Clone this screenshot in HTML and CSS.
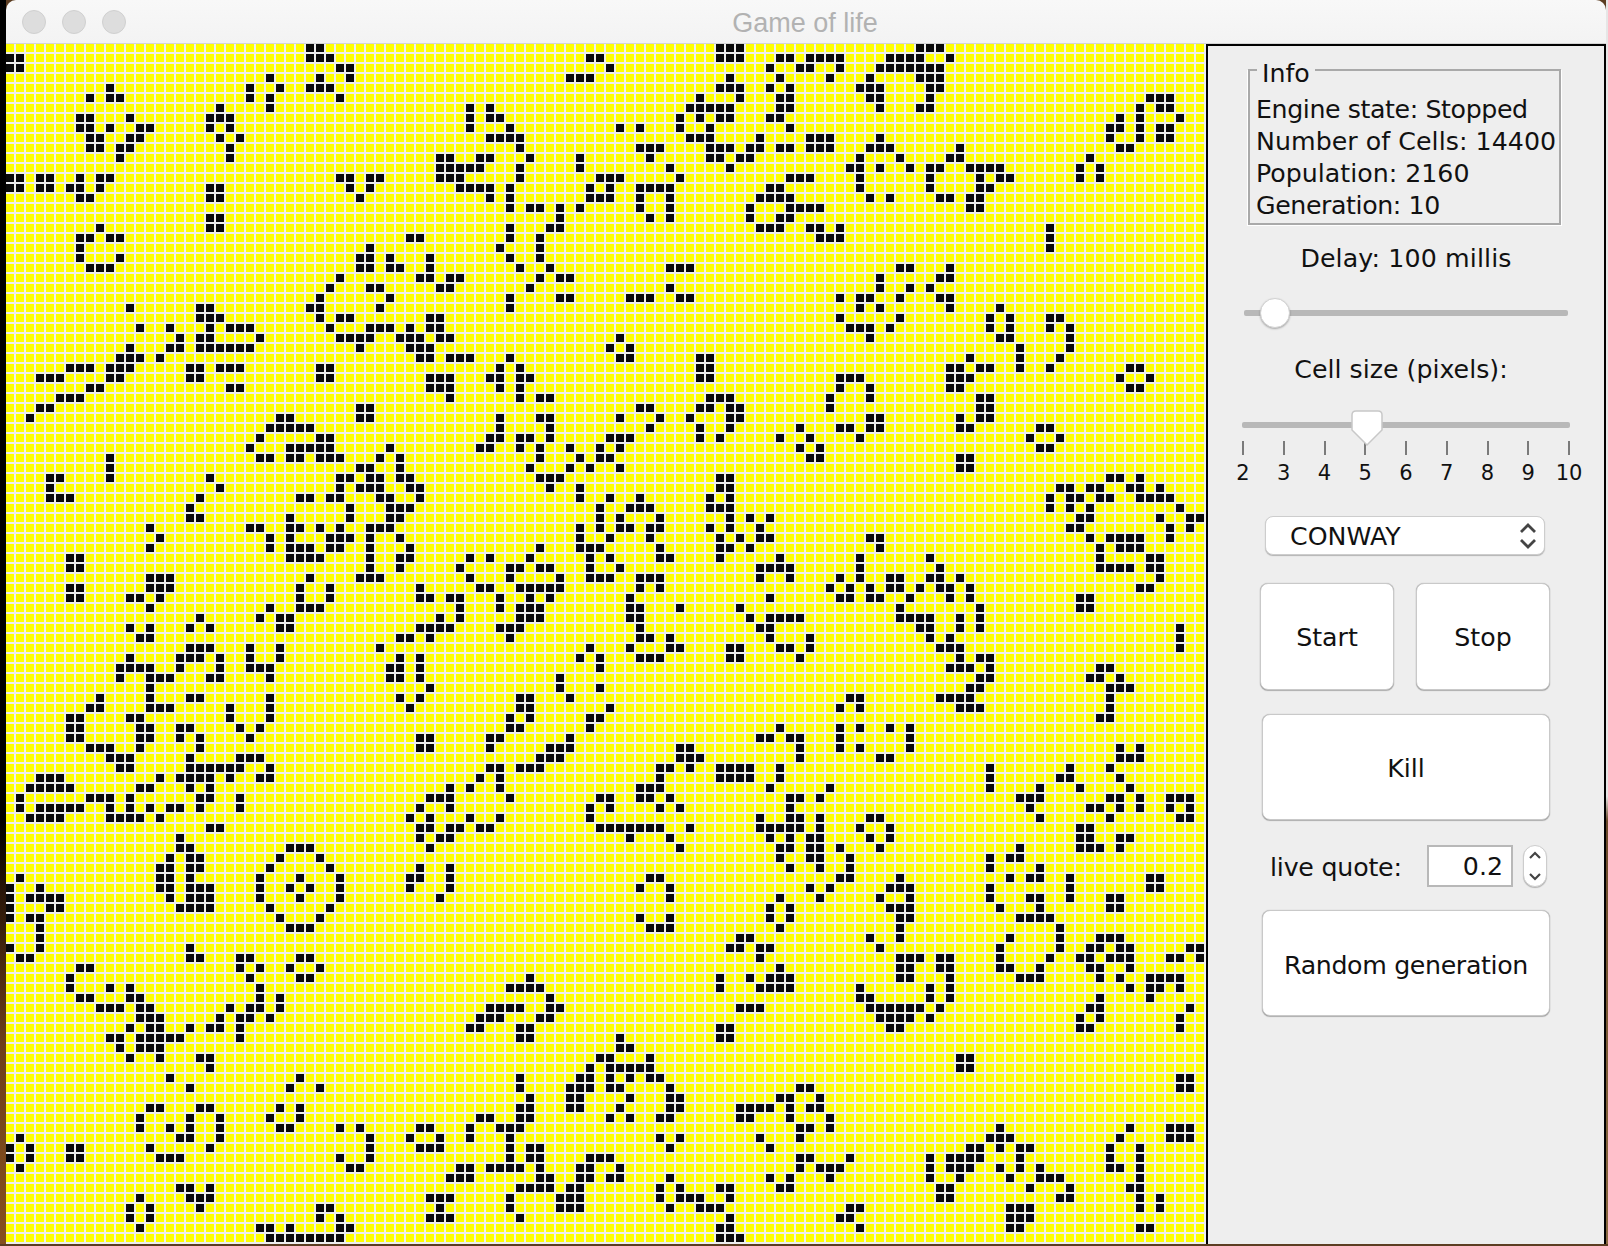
FILE: index.html
```html
<!DOCTYPE html>
<html lang="en">
<head>
<meta charset="utf-8">
<title>Game of life</title>
<link rel="stylesheet" href="styles.css">
</head>
<body>
<div class="desktop">
  <div class="strip-left"></div>
  <div class="window">
    <header class="titlebar">
      <div class="lights"><span class="light"></span><span class="light"></span><span class="light"></span></div>
      <div class="title">Game of life</div>
    </header>
    <div class="content">
      <canvas id="board" class="board" width="1200" height="1200"></canvas>
      <aside class="panel">
        <fieldset class="info">
          <legend class="info-legend">Info</legend>
          <div class="line tight">Engine state: Stopped</div>
          <div class="line wide-line">Number of Cells: 14400</div>
          <div class="line">Population: 2160</div>
          <div class="line tight">Generation: 10</div>
        </fieldset>
        <div class="line caption delay-caption">Delay: 100 millis</div>
        <div class="slider delay-slider">
          <div class="track"></div>
          <div class="round-thumb"></div>
        </div>
        <div class="line caption cell-caption">Cell size (pixels):</div>
        <div class="slider cell-slider">
          <div class="track"></div>
          <svg class="point-thumb" width="34" height="38" viewBox="0 0 34 38">
            <path class="point-thumb-shape" d="M6 2H28Q32 2 32 6V21L17 36L2 21V6Q2 2 6 2Z"/>
          </svg>
        </div>
        <div class="ticks">
          <div class="tick"><span class="tick-label">2</span></div>
          <div class="tick"><span class="tick-label">3</span></div>
          <div class="tick"><span class="tick-label">4</span></div>
          <div class="tick"><span class="tick-label">5</span></div>
          <div class="tick"><span class="tick-label">6</span></div>
          <div class="tick"><span class="tick-label">7</span></div>
          <div class="tick"><span class="tick-label">8</span></div>
          <div class="tick"><span class="tick-label">9</span></div>
          <div class="tick"><span class="tick-label">10</span></div>
        </div>
        <div class="combo">
          <span class="combo-text">CONWAY</span>
          <svg class="combo-arrows" width="18" height="28" viewBox="0 0 18 28">
            <path class="chevron" d="M2 10L9 3L16 10"/>
            <path class="chevron" d="M2 18L9 25L16 18"/>
          </svg>
        </div>
        <div class="button-row">
          <button class="btn btn-half">Start</button>
          <button class="btn btn-half">Stop</button>
        </div>
        <button class="btn btn-wide kill">Kill</button>
        <div class="quote-row">
          <span class="quote-label">live quote:</span>
          <div class="quote-field">0.2</div>
          <div class="spinner">
            <svg width="14" height="32" viewBox="0 0 14 32">
              <path class="chevron-small" d="M2 8L7 3L12 8"/>
              <path class="chevron-small" d="M2 24L7 29L12 24"/>
            </svg>
          </div>
        </div>
        <button class="btn btn-wide random">Random generation</button>
      </aside>
    </div>
  </div>
  <div class="strip-right"></div>
</div>
<script src="game.js"></script>
</body>
</html>
```
FILE: styles.css
```css
html, body {
  margin: 0;
  padding: 0;
  width: 1608px;
  height: 1246px;
  overflow: hidden;
  background: #5c3d22;
}
* { box-sizing: border-box; }
.desktop {
  display: flex;
  height: 1244px;
  font-family: "DejaVu Sans", sans-serif;
  font-size: 25.25px;
  color: #111;
}
.strip-left {
  width: 6px;
  background: linear-gradient(#000 0, #000 66%, #2a1608 72%, #6d3f1c 84%, #85501f 100%);
}
.strip-right {
  width: 2px;
  background: linear-gradient(#e6e6e6 0, #e6e6e6 64%, #6b4a2a 66%, #8a6a42 100%);
}
.window {
  width: 1600px;
  display: flex;
  flex-direction: column;
}
.titlebar {
  height: 44px;
  background: linear-gradient(#f8f8f8, #f3f3f3);
  border-bottom: 1px solid #d4d4d4;
  border-radius: 10px 10px 0 0;
  position: relative;
  display: flex;
  align-items: center;
  justify-content: center;
}
.lights {
  position: absolute;
  left: 16px;
  top: 10px;
  display: flex;
  gap: 16px;
}
.light {
  width: 24px;
  height: 24px;
  border-radius: 50%;
  background: #dddddd;
  border: 1px solid #d0d0d0;
}
.title {
  padding: 3px 2px 0 0;
  font-family: "Liberation Sans", sans-serif;
  font-size: 27px;
  color: #b2b2b2;
}
.content {
  display: flex;
  height: 1200px;
}
.board {
  display: block;
  width: 1200px;
  height: 1200px;
}
.panel {
  width: 400px;
  height: 1200px;
  background: #eeeeee;
  border: solid #000;
  border-width: 2px 2px 0 2px;
  padding-top: 4px;
  display: flex;
  flex-direction: column;
  align-items: flex-start;
}
.line {
  height: 32px;
  line-height: 32px;
  white-space: nowrap;
}
.tight { letter-spacing: -0.4px; }
.wide-line { letter-spacing: 0.05px; }
.info {
  margin: 0 0 0 40px;
  padding: 4px 0 1px 6px;
  width: 313px;
  min-width: 0;
  border: 2px solid #a9a9a9;
  box-shadow: 1px 1px 0 #fff, -1px 1px 0 #fff;
}
.info-legend {
  margin-left: 1px;
  padding: 8px 5px 0;
  height: 40px;
  line-height: 32px;
}
.caption {
  width: 100%;
  text-align: center;
}
.delay-caption {
  margin-top: 18px;
  letter-spacing: 0.12px;
}
.cell-caption {
  margin-top: 26px;
  padding-right: 10px;
}
.slider {
  position: relative;
  height: 30px;
  display: flex;
  align-items: center;
}
.delay-slider {
  margin: 23px 0 0 36px;
  width: 324px;
}
.cell-slider {
  margin: 24px 0 0 34px;
  width: 328px;
}
.track {
  width: 100%;
  height: 6px;
  background: #b8b8b8;
  border-radius: 2px;
}
.round-thumb {
  position: absolute;
  left: 16px;
  top: 0;
  width: 30px;
  height: 30px;
  border-radius: 50%;
  background: #fff;
  border: 1px solid #d2d2d2;
  box-shadow: 0 1px 2px rgba(0, 0, 0, 0.3);
}
.point-thumb {
  position: absolute;
  left: 108px;
  top: -1px;
}
.point-thumb-shape {
  fill: #fff;
  stroke: #c8c8c8;
  stroke-width: 1.5;
}
.ticks {
  margin: 1px 0 0 35px;
  width: 326px;
  display: flex;
  justify-content: space-between;
}
.tick {
  width: 0;
  display: flex;
  flex-direction: column;
  align-items: center;
}
.tick::before {
  content: "";
  flex: none;
  width: 2px;
  height: 14px;
  background: #7a7a7a;
}
.tick-label {
  margin-top: 6px;
  font-size: 21px;
  line-height: 24px;
}
.combo {
  margin: 31px 0 0 57px;
  width: 280px;
  height: 39px;
  padding: 0 7px 0 24px;
  background: #fff;
  border: 1px solid #cdcdcd;
  border-radius: 8px;
  box-shadow: 0 1px 1px rgba(0, 0, 0, 0.25);
  display: flex;
  align-items: center;
  justify-content: space-between;
}
.combo-text { padding-top: 2px; }
.chevron {
  fill: none;
  stroke: #444;
  stroke-width: 2.8;
}
.chevron-small {
  fill: none;
  stroke: #444;
  stroke-width: 2.2;
}
.button-row {
  margin: 28px 0 0 52px;
  display: flex;
  gap: 22px;
}
.btn {
  font: inherit;
  color: inherit;
  background: #fff;
  border: 1px solid #c9c9c9;
  border-radius: 8px;
  box-shadow: 0 0 1px rgba(0, 0, 0, 0.3), 0 1px 1px rgba(0, 0, 0, 0.25);
  padding: 2px 0 0;
}
.btn-half {
  width: 134px;
  height: 107px;
}
.btn-wide {
  width: 288px;
  height: 106px;
  margin-left: 54px;
}
.kill { margin-top: 24px; }
.random {
  margin-top: 23px;
  padding-top: 4px;
  letter-spacing: -0.35px;
}
.quote-row {
  margin: 25px 0 0 62px;
  height: 42px;
  display: flex;
  align-items: center;
}
.quote-label {
  width: 157px;
  padding-top: 2px;
  letter-spacing: -0.2px;
}
.quote-field {
  width: 86px;
  height: 42px;
  line-height: 40px;
  padding-right: 8px;
  text-align: right;
  background: #fff;
  border: 2px solid #b8b8b8;
}
.spinner {
  margin-left: 10px;
  width: 24px;
  height: 42px;
  background: #fff;
  border: 1px solid #cdcdcd;
  border-radius: 12px;
  box-shadow: 0 1px 1px rgba(0, 0, 0, 0.25);
  display: flex;
  align-items: center;
  justify-content: center;
}
```
FILE: game.js
```js
var blocks = [
 {x:0,y:0,rows:["30 31","0 1 30 31 32","0 1 33 34","26 31 34","10 24 27 30 31 32","8 10 11 24 26 33","21 26","7 8 12 20 21 22","7 8 10 13 14 20 22","8 9 12 13 21 23",
 "8 9 11 12 22","11 22","","0 1 3 4 7 9 10 33 34 36 37","0 1 3 4 6 7 9 20 21 34 36","7 8 20 21 35","","20 21","9 20 21","7 8 10 11",
 "7 36","7 11 35 36 38","8 9 10 35 36 38 39","33","32 36 37","31 38","12 19 20 30 31 37","19 20 21 31 33 34","13 16 20 22 23 24 32 36 37 38","17 19 20 25 33 34 35 36 39",
 "12 16 17 19 20 21 22 23 24 35","11 12 13 15","6 7 8 10 11 12 18 19 21 22 23 31 32","3 4 5 10 11 18 19 31 32","8 9 22 23","5 6 7","3 4 35 36","2 27 28 35 36","26 27 28 29 30","25 31 32",
 "24 28 29 30 31 32 38","10 25 26 28 29 31 32 33 37 39","10 35 36 39","4 5 10 20 33 34 36 37 39","4 21 33 35 36 37","4 5 6 19 29 30 32 33 37 38","18 34 38 39","18 19 28 34 38 39","14 24 25 28 29 31 33 36 37 38","15 26 28 32 33 34 36 39",
 "14 26 28 29 30 32 33 36","6 7 28 29 30 31 36 39","6 7 36 39","14 15 16 30 35 36 37","6 7 14 15 16 29 32","6 7 12 13 15 29 32","14 26 29 30 31","19 25 27 28","12 14 18 20 27 28","13 14 39"]},
 {x:40,y:0,rows:["31 32 33","18 19 31 32 33 37 38","20 36 39","16 17 18 32 37","31 32 33 36 38","29 33 37 38","6 8 28 29 30 31 32 37 38","6 8 9 27 29 31 32 36 37","6 10 21 23 27 30 38","8 9 10 11 28 29 30 35",
 "11 23 24 25 30 31 32 34 35 37 38","3 4 7 8 12 17 24 30 31 33 34","3 4 5 6 7 11 17 26 32","3 4 5 11 19 20 21 27 38 39","5 6 7 8 10 18 20 23 24 25 26 36 37","8 10 18 19 20 23 26 35 36 37 38","10 12 13 15 17 23 26 34 38 39","15 24 26 34 37 38","10 14 15 35 36 37","0 1 10 13",
 "9 13","2 10 13","2 11 14 26 27 28","1 2 4 5 13 15 16","3 4 12 26","10 15 16 22 23 24 27 28","10","2 3","0 2 3","0 1 3 4 21",
 "0 1 2 20 22","1 2 4 5 6 10 21 22 29 30","9 11 29 30","2 3 4 8 9 11 12 29 30","2 3 4 9 11","4 11 13 14 30 31 32","23 24 29 30 32 33","9 13 14 21 25 28 32 33","9 14 24 29 32 39","8 9 11 12 14 20 21 22 29 31 37",
 "7 8 11 13 16 19 21 39","13 17 19 20","12 16 18 21","0 13 14 15 31 32","0 1 14 17 31 32","1 17 20 23 30 32","0 19 22 23 24 30 31 32","19 21 25 32 34 36","17 19 21 22 24 25 30 32 35","17 20 24 31 33 35 36",
 "0 13 17 18 19 25 31 32 34","0 6 8 12 18 20 25 26 31 37","5 10 11 13 14 18 21 35 36 37 38","6 10 15 18 19 20 23 24 25 35 38","1 7 8 11 12 13 14 15 23 25","1 2 4 5 9 12 14 22 36","5 9 11 12 13 22 23 27 33","3 5 11 12 13 22 23 34 36 37 38 39","1 2 3 4 9 10 11 23 35 36","0 2 10 23 24 26 36"]},
 {x:80,y:0,rows:["11 12 13","0 1 2 3 8 9 10 11 14","0 3 7 8 9 10 11 12 13","2 6 11 12 13","5 6 7 12 13","6 7 12 34 35 36","7 11 12 33 35 36","31 33 37","30 31 33 35 36","0 1 2 7 30 33 35 36",
 "0 1 2 6 7 8 15 31 32","5 9 14 15 28","4 5 7 10 12 13 16 17 18 19 27 29","0 5 12 17 19 20 27 29","5 12 17 18","6 8 13 14 16 17","0 1 16 17","","0 1 3 24","1 2 3 24",
 "24","","9 10 14","7 13 14","7 10 12","3 5 6 9 13 14","5 7 14 19","3 9 18 20 24 25","4 5 6 8 18 20 24 26","6 19 20 26",
 "21 26","16 21 25","14 15 17 18 21 24 32 33","3 4 5 14 15 16 31 34","3 6 14 15 32 33","2 6 17 18","2 17 18","6 7 15 17 18","3 4 6 7 15 16 23 24","0 5 22 25",
 "1 23 24","0 1 15 16","15 16","30 31 33","25 26 28 29 32 33 35","24 26 27 29 30 33 34 35 36","24 26 28 37","27 28 35 38 39","26 27 36 38","6 7 28 30 31 32 33 36",
 "7 29 31 32 33","5 12 29 34 35","5 13 29 30 31 32 34 35","3 5 8 9 12 13 15 35","2 4 6 8 9 11 13 14 16 33 34","3 4 6 7 10 14 16 27 28","9 17 27 28","9 10 11 12 15 17","11 12 15 17 37","0 12 14 37"]},
 {x:0,y:60,rows:["18 19 20 24 27 37","12 17 18 19 21 24 27 39","11 12 13 14 17 21 24 25 26 38 39","11 14 15 16 20 21 26 38 39","14","9 14 18 19 26 39","8 9 14 15 16 22 26","6 7 12 13 22 26","6 7 13 14 17 18 23 25","6 7 13 14 17 19 24",
 "8 9 10 13 19","10 11 12 18 23 24 25","11 12 18 19 20 21 22 23 26","3 4 5 15 17 18 19 20 22 25 26","2 3 4 5 6 13 14 18 20","1 8 9 10 12 19 20 23","1 3 4 5 6 7 10 12 14 16 17 19 23","2 3 4 5 10 11 12 13 15","20 21","17",
 "17 18 28 29 30","16 18 19 27 31","15 16 18 19 26 32","1 15 16 18 25 29 33","0 3 15 16 18 19 20 25 28 30 33","0 2 3 4 5 16 18 19 20 25 29 33","0 4 5 17 18 19 20 26 32","0 2 3 27 31","3 28 29 30","3",
 "0 3 18","1 2 18 19 23 24 29 30","7 8 23 25 28 31","6 24 29 30","6 10 12 25","7 8 12 13 25 27","9 10 11 13 14 22 24 25 27","13 14 15 21 23 24 26","12 14 15 18 20 21 23","10 11 13 14 15 16 17 23",
 "11 13 14 15","12 15 19 20","20","16 29","18 28 31","","14 15 19 20 27 29","13 18 21 26 29","13 16 18 21 27 28 33 35","1 17 18 21 36",
 "0 2 6 7 14 20 36","0 2 6 7 15 16 17 33 36","1 34 35","","17 18 20","13 18 19 20","12 14 19 31 32","12 14 31 33","13 25 26 28 33 34","26 27 28 29 30 31 32 33"]},
 {x:40,y:60,rows:["18 22 26 27 32 33 37 38","1 17 19 23 24 25 32 33 39","1 19","1 15","2 15 19","1 11 12 16","0 11 12 20","10 12 18 19","10 11 18 37","1 2 8 9 16 35 36 38 39",
 "1 2 8 14 15 16 27 28 39","13 14 15 27 28 29 39","8 9 11 12 13 25 26 28 31 32 33 34 37","7 9 25 31 32 33 34 37","4 6 9 23 24 25 36","2 3 4 10 19 20 23 24 26 38 39","1 4 18 20 25 27 38","0 2 6 9 18 35 38 39","1 2 4 5 7 8 19 20 21 22 23 24 25 28 35 36 37 38 39","1 3 4 22 26 36 38",
 "2 27 37 38","37","1 4 38","0 1 4 24 25","0 4 23 26","3 26 37","36 38","23 26 36 38","24 25 26 37","33 34",
 "32 33 35 36","35","37","12 31 34 36 37 38","10 11 12 13 31 35 36 37 38","14","8 9 10 11 14 15 33 34 35","7 8 9 13 14","6 7 11 12 31 32","11 12 21 31 32",
 "21 22","19 20 24","18 20 21 22 23 24","11 17 18 20 22 24 25","11 16 17 18 20 21 26 39","12 16 17 22 26 27 37 38","11 12 16 17 21 26 27 33 34 35 36 38","7 8 11 12 20 22 25 26 33 34 38","1 2 6 9 10 11 39","0 3 6 10 25 27 35 39",
 "1 2 3 10 12 13 26 36","10 12 13 18 19 20 39","5 6 8 9 10 11 13 17 18 21 39","4 5 6 13 14 17 18 20 21 26 36 38","11 12 13 14 16 17 25 27 31 32 37 38","2 3 4 10 15 16 17 25 27 28 29 32","3 10 15 16 17 26 29 30 31","2 3 4 11 32","31 32","31 32 33"]},
 {x:80,y:60,rows:["0 13 14 15 37","15 17 18","14 15 16 18 29 30","17 18 28 29 31","16 17 30 31 32","4 5 13 14 15 16 30","3 5 15 16 17 30","29 30","3 5 8 10","3 10",
 "3 5 10 31 33","7 8 31 32 33","18 26 30","18 25 26 31","2 18 23 27 32","1 21 22 23 30 31 33 36 37 38","22 28 29 31 33 36 38","1 6 7 23 30 37 38","1 5 8 27 28","0 1 6 8 27 28 31 32",
 "0 1 3 7 21 27 28 29 31","0 1 4 18 20 21","1 4 18 23","3 4 9 20 22 23 26 34 35","0 2 8 9 10 18 26 34 35","1 7 10 18 22 23 26 30 31","8 9 10 19 23 30 31","9 10 21 22 23 24","9 25","6 9 20 25 29 30 31",
 "7 19 25 28 29 31 32 38 39","9 10 11 13 14 19 24 27 28 30 31 32 36 37 39","9 10 13 14 19 20 23 28 29 32","9 10 14 21 22 23 29 31 34 35 36 37","5 12 14 32 34 35 37","5 6 12 14 29 34","6 7 8 9 10 11 13 28 29 38","7 8 9 10 12 27 29 37","8 9 27 28 37","",
 "","15 16","15 16","37 38","0 37 38","1","0 1","2","0 2 19 32 36 37 38","18 19 20 31 36 37 38",
 "16 17 19 21 22 30 33","0 4 12 14 15 16 17 21 30 33","1 2 3 12 14 15 16 19 21 23 30 31 33","2 12 15 20 23 24 25 33","13 14 22 26 32 33","13 14 25 26 33 35","4 5 20 21 22 33 35","3 4 20 21 22","5 20 21 33 34",""]}
];

var canvas = document.getElementById("board");
var ctx = canvas.getContext("2d");
var alive = {};
blocks.forEach(function (block) {
  block.rows.forEach(function (row, r) {
    if (!row) return;
    row.split(" ").forEach(function (c) {
      alive[(block.x + Number(c)) + "," + (block.y + r)] = true;
    });
  });
});
ctx.fillStyle = "#eeeeee";
ctx.fillRect(0, 0, 1200, 1200);
for (var y = 0; y < 120; y++) {
  for (var x = 0; x < 120; x++) {
    ctx.fillStyle = alive[x + "," + y] ? "#0a0a0a" : "#ffff00";
    ctx.fillRect(x * 10, y * 10, 8, 8);
  }
}
```
